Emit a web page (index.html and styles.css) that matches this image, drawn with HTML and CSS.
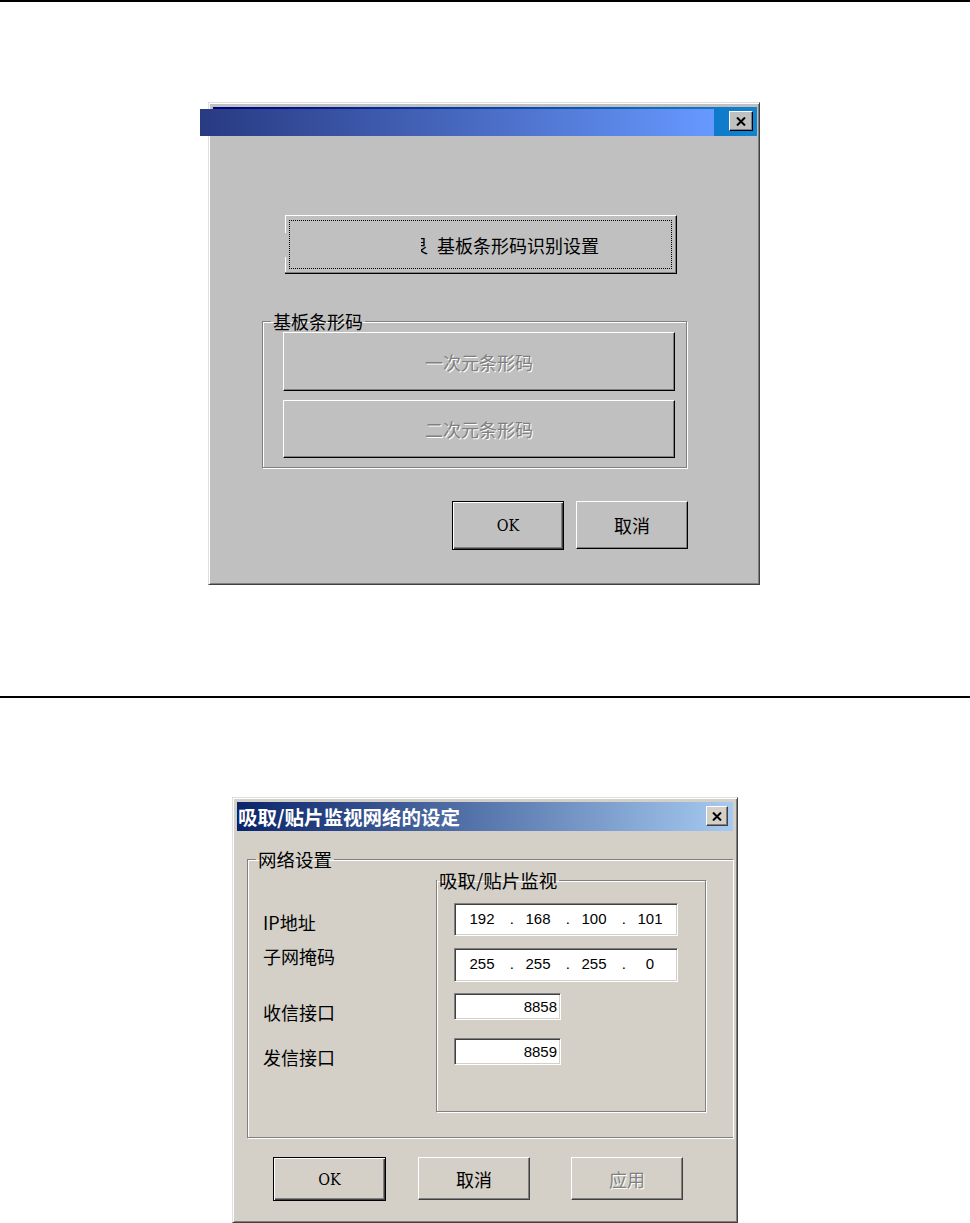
FILE: index.html
```html
<!DOCTYPE html>
<html lang="zh-CN">
<head>
  <meta charset="UTF-8" />
  <meta name="viewport" content="width=device-width, initial-scale=1.0"/>
  <title>基板条形码 / 吸取贴片监视网络的设定</title>
  <link rel="stylesheet" href="styles.css">
</head>
<body>
  <div class="rule"></div>

  <section class="sheet-top">
    <div class="dlg dlg-a">
      <div class="titlebar titlebar-a">
        <div class="title-overlay"></div>
        <button class="close close-a" aria-label="关闭">
          <svg width="10" height="9" viewBox="0 0 10 9"><path d="M1 0.5 L9 8.5 M9 0.5 L1 8.5" stroke="#000" stroke-width="2" fill="none"/></svg>
        </button>
      </div>

      <button class="btn big"><span class="clip"><span>艮</span></span>基板条形码识别设置</button>

      <fieldset class="group group-a">
        <legend>基板条形码</legend>
        <button class="btn wide" disabled>一次元条形码</button>
        <button class="btn wide second" disabled>二次元条形码</button>
      </fieldset>

      <div class="actions actions-a">
        <button class="btn default ok-a">OK</button>
        <button class="btn cancel-a">取消</button>
      </div>
    </div>
  </section>

  <div class="rule"></div>

  <section class="sheet-bottom">
    <div class="dlg dlg-b">
      <div class="titlebar titlebar-b">
        <span class="title-text">吸取/贴片监视网络的设定</span>
        <button class="close close-b" aria-label="关闭">
          <svg width="10" height="9" viewBox="0 0 10 9"><path d="M1 0.5 L9 8.5 M9 0.5 L1 8.5" stroke="#000" stroke-width="2" fill="none"/></svg>
        </button>
      </div>

      <fieldset class="group group-net">
        <legend>网络设置</legend>
        <div class="net-row">
          <div class="labels">
            <div class="lbl l-ip">IP地址</div>
            <div class="lbl l-mask">子网掩码</div>
            <div class="lbl l-recv">收信接口</div>
            <div class="lbl l-send">发信接口</div>
          </div>
          <fieldset class="group group-mon">
            <legend>吸取/贴片监视</legend>
            <div class="field ip">
              <span class="oct">192</span><span class="dot">.</span><span class="oct">168</span><span class="dot">.</span><span class="oct">100</span><span class="dot">.</span><span class="oct">101</span>
            </div>
            <div class="field ip mask">
              <span class="oct">255</span><span class="dot">.</span><span class="oct">255</span><span class="dot">.</span><span class="oct">255</span><span class="dot">.</span><span class="oct">0</span>
            </div>
            <div class="field port recv">8858</div>
            <div class="field port send">8859</div>
          </fieldset>
        </div>
      </fieldset>

      <div class="actions actions-b">
        <button class="btn default ok-b">OK</button>
        <button class="btn cancel-b">取消</button>
        <button class="btn apply-b" disabled>应用</button>
      </div>
    </div>
  </section>
</body>
</html>
```

FILE: styles.css
```css
body {
  margin: 0;
  background: #fff;
  font-family: "Noto Sans CJK SC", sans-serif;
  color: #000;
}
.rule {
  height: 2px;
  background: #000;
}
.sheet-top {
  height: 694px;
  padding-top: 100px;
  box-sizing: border-box;
}
.sheet-bottom {
  padding-top: 99px;
}

/* window frame */
.dlg {
  box-sizing: border-box;
  border: 1px solid;
  border-color: #dfdfdf #404040 #404040 #dfdfdf;
  box-shadow: inset 1px 1px #fff, inset -1px -1px #808080;
}
.dlg-a {
  margin-left: 208px;
  width: 552px;
  height: 483px;
  padding: 4px 2px 4px 4px;
  background: #c0c0c0;
}
.dlg-b {
  margin-left: 232px;
  width: 506px;
  height: 426px;
  padding: 4px;
  background: #d4d0c8;
  overflow: hidden;
}

.titlebar {
  position: relative;
  height: 29px;
  display: flex;
  align-items: flex-start;
  justify-content: space-between;
}
.titlebar-a {
  background: linear-gradient(90deg, #000080, #1084d0);
  justify-content: flex-end;
  padding: 4px 4px 0 0;
  box-sizing: border-box;
}
.title-overlay {
  position: absolute;
  left: -13px;
  top: 2px;
  width: 514px;
  height: 27px;
  background: linear-gradient(90deg, #283a82, #4a6cc4 55%, #6699ff);
}
.titlebar-b {
  background: linear-gradient(90deg, #0a246a, #a6caf0);
  padding: 0 5px 0 1px;
  box-sizing: border-box;
}
.title-text {
  color: #fff;
  font-weight: 700;
  font-size: 19.5px;
  line-height: 29px;
  white-space: nowrap;
}

.close {
  display: flex;
  align-items: center;
  justify-content: center;
  padding: 0;
  box-sizing: border-box;
  border: 1px solid;
  border-color: #fff #000 #000 #fff;
  box-shadow: inset -1px -1px #808080;
}
.close-a {
  width: 24px;
  height: 20px;
  background: #c0c0c0;
}
.close-b {
  width: 22px;
  height: 20px;
  margin-top: 4px;
  background: #d4d0c8;
  border-color: #fff #404040 #404040 #fff;
}

/* push buttons */
.btn {
  font-family: "Noto Sans CJK SC", sans-serif;
  font-size: 18px;
  color: #000;
  background: inherit;
  box-sizing: border-box;
  border: 1px solid;
  border-color: #fff #000 #000 #fff;
  box-shadow: inset -1px -1px #808080;
  display: flex;
  align-items: center;
  justify-content: center;
  padding: 0;
}
.dlg-b .btn {
  border-color: #fff #404040 #404040 #fff;
}
.btn:disabled {
  color: #808080;
  text-shadow: 1px 1px 0 #fff;
}
.btn.default {
  border: 1px solid #000;
  box-shadow: inset 1px 1px #fff, inset -1px -1px #404040, inset -2px -2px #808080;
  font-family: "DejaVu Serif Condensed", "Liberation Serif", serif;
  font-size: 16px;
}

.big {
  position: relative;
  margin: 79px 0 0 72px;
  width: 392px;
  height: 59px;
  justify-content: flex-start;
  padding-left: 136px;
  border-left: 0;
  background:
    linear-gradient(#fff, #fff) left top / 1px 17px no-repeat,
    linear-gradient(#fff, #fff) left bottom / 1px 16px no-repeat,
    #c0c0c0;
}
.big::after {
  content: "";
  position: absolute;
  left: 4px;
  top: 4px;
  right: 4px;
  bottom: 4px;
  border: 1px dotted #000;
}
.clip {
  display: inline-block;
  width: 7px;
  overflow: hidden;
  margin-right: 9px;
  white-space: nowrap;
}
.clip span {
  display: inline-block;
  margin-left: -11px;
}

/* group boxes */
.group {
  margin: 0;
  padding: 0;
  min-width: 0;
  box-sizing: border-box;
  border: 1px solid #808080;
  box-shadow: 1px 1px 0 #fff, inset 1px 1px 0 #fff;
}
.group legend {
  padding: 0 2px;
  font-size: 18px;
  line-height: 20px;
}
.group-a {
  margin: 37px 0 0 49px;
  width: 425px;
  height: 157px;
}
.group-a legend {
  margin-left: 8px;
}
.wide {
  width: 392px;
  height: 59px;
  margin: 1px 0 0 20px;
}
.wide.second {
  height: 58px;
  margin-top: 9px;
}

.actions {
  display: flex;
}
.actions-a {
  gap: 12px;
  margin: 33px 0 0 239px;
}
.ok-a {
  width: 112px;
  height: 49px;
}
.cancel-a {
  width: 112px;
  height: 48px;
}

/* network dialog */
.group-net {
  margin: 18px 0 0 10px;
  width: 486px;
  height: 289px;
  border-right: 0;
}
.group-net > legend {
  margin-left: 8px;
  font-size: 18.5px;
}
.net-row {
  display: flex;
}
.labels {
  width: 188px;
  padding-left: 15px;
  box-sizing: border-box;
  display: flex;
  flex-direction: column;
}
.lbl {
  font-size: 18px;
  line-height: 20px;
  white-space: nowrap;
}
.l-ip { margin-top: 43px; }
.l-mask { margin-top: 14px; }
.l-recv { margin-top: 36px; }
.l-send { margin-top: 25px; }

.group-mon {
  margin-top: 1px;
  width: 270px;
  height: 242px;
}
.group-mon legend {
  font-size: 18.5px;
}

.field {
  box-sizing: border-box;
  background: #fff;
  border: 1px solid;
  border-color: #808080 #fff #fff #808080;
  box-shadow: inset 1px 1px #404040, inset -1px -1px #d4d0c8;
  font-family: "Liberation Sans", sans-serif;
  font-size: 15px;
  margin-left: 17px;
  display: flex;
  align-items: center;
}
.ip {
  width: 224px;
  height: 33px;
  margin-top: 13px;
  padding: 0 0 3px 9px;
}
.ip.mask {
  height: 34px;
  margin-top: 12px;
}
.oct {
  width: 36px;
  text-align: center;
}
.dot {
  width: 20px;
  text-align: right;
  padding-right: 6px;
  box-sizing: border-box;
}
.port {
  width: 107px;
  height: 27px;
  justify-content: flex-end;
  padding: 0 3px 1px 0;
}
.recv { margin-top: 11px; }
.send { margin-top: 18px; }

.actions-b {
  margin: 19px 0 0 36px;
}
.ok-b {
  width: 113px;
  height: 44px;
}
.cancel-b {
  width: 112px;
  height: 43px;
  margin-left: 32px;
}
.apply-b {
  width: 112px;
  height: 43px;
  margin-left: 41px;
}
```
